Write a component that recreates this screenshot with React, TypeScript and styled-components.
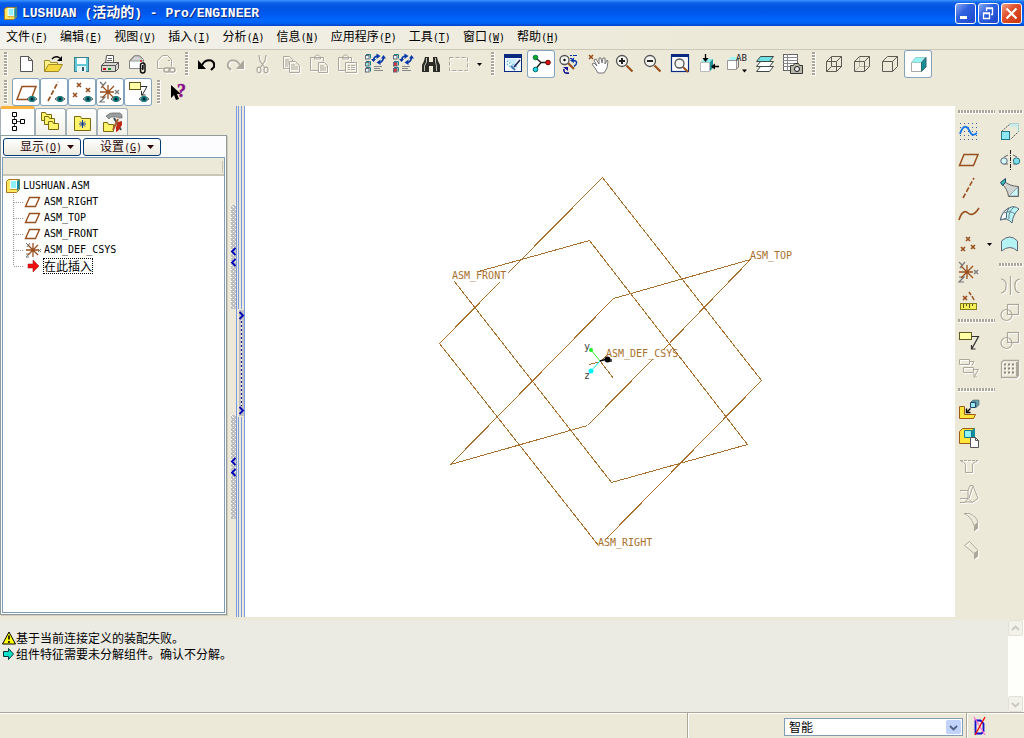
import React from 'react';
import styled, { createGlobalStyle, css } from 'styled-components';

const face = '#ece9d8';
const brown = '#99501f';
const gray = '#aca899';
const plane3d = '#a8702c';
const latin = '"DejaVu Sans Mono", "Noto Sans CJK SC", monospace';
const cjk = '"Noto Sans CJK SC", "Liberation Sans", sans-serif';

const GlobalStyle = createGlobalStyle`
  * { box-sizing: border-box; }
  html, body { margin: 0; padding: 0; }
  body { background: ${face}; font: 12px/16px ${cjk}; color: #000; }
  button, select { font: inherit; color: inherit; margin: 0; padding: 0; }
  svg { display: block; }
`;

const Window = styled.div`
  display: flex;
  flex-direction: column;
  min-height: 100vh;
  background: ${face};
`;

/* ---------- title bar ---------- */

const TitleBar = styled.header`
  display: flex;
  align-items: center;
  gap: 4px;
  height: 26px;
  padding: 0 2px 0 3px;
  background: linear-gradient(#3d95ff 0, #0a5fe8 3px, #0054e3 8px, #0058ee 14px, #0068ff 20px, #0062f5 23px, #0042c8 26px);
`;

const TitleText = styled.h1`
  flex: 1;
  margin: 0;
  font: bold 13px/20px "Liberation Mono", "Noto Sans CJK SC", monospace;
  color: #fff;
  text-shadow: 1px 1px 0 #0a2a80;
  white-space: pre;
`;

const TitleCjk = styled.span`
  font-size: 14px;
`;

const WindowButtons = styled.div`
  display: flex;
  gap: 2px;
`;

const WindowButton = styled.button<{ $close?: boolean }>`
  width: 21px;
  height: 21px;
  border: 1px solid #fff;
  border-radius: 3px;
  background: ${p => p.$close
    ? 'linear-gradient(135deg, #f0a088, #e2512c 40%, #c8350c)'
    : 'linear-gradient(135deg, #8aa8f4, #2f62e0 40%, #1c46c8)'};
`;

/* ---------- menu bar ---------- */

const MenuBar = styled.nav`
  display: flex;
  align-items: center;
  height: 24px;
  border-bottom: 1px solid #cbc8b8;
  background: linear-gradient(90deg, #f3f2ec, ${face} 70%);
`;

const MenuItem = styled.button`
  height: 20px;
  padding: 0 6px;
  margin-top: -2px;
  border: 0;
  background: none;
  white-space: nowrap;
`;

const Key = styled.span`
  font: 10px/16px ${latin};
`;

/* ---------- tool bars ---------- */

const ToolRow = styled.div`
  display: flex;
  height: 28px;
`;

const Handle = styled.div`
  flex: none;
  width: 13px;
  height: 28px;
  padding: 2px 0 2px 5px;
  &:first-child { width: 12px; padding-left: 4px; }
  &::before {
    content: "";
    display: block;
    width: 3px;
    height: 24px;
    border-right: 1px solid #fbfaf4;
    background: repeating-linear-gradient(#aaa69c 0 2px, #fbfaf4 2px 3px);
  }
`;

const ToolButton = styled.button<{ $on?: boolean }>`
  flex: none;
  width: 28px;
  height: 28px;
  border: 0;
  border-radius: 3px;
  background: none;
  ${p => p.$on && css`
    background: #fff;
    box-shadow: inset 0 0 0 1px #84a3bd;
  `}
  &:disabled svg { filter: drop-shadow(1px 1px 0 #fff); }
`;

const ArrowButton = styled.button`
  display: flex;
  align-items: center;
  justify-content: center;
  flex: none;
  width: 13px;
  height: 28px;
  border: 0;
  background: none;
`;

/* ---------- main area ---------- */

const Main = styled.main`
  display: flex;
  flex: 1;
`;

const Navigator = styled.aside`
  display: flex;
  flex-direction: column;
  flex: none;
  width: 228px;
  padding-bottom: 2px;
`;

const TabList = styled.div`
  display: flex;
  align-items: flex-end;
  height: 29px;
`;

const Tab = styled.button<{ $active?: boolean }>`
  display: flex;
  align-items: center;
  justify-content: center;
  width: 31px;
  height: 27px;
  border: 1px solid #a3b0b8;
  border-bottom: 0;
  border-radius: 3px 3px 0 0;
  background: linear-gradient(#fff, #f1f0e8);
  ${p => p.$active && css`
    width: 35px;
    height: 29px;
    border-top: 3px solid #f9b140;
    background: #fff;
  `}
`;

const NavPanel = styled.section`
  display: flex;
  flex-direction: column;
  flex: 1;
  margin-right: 1px;
  padding: 2px 1px 1px 1px;
  border: 1px solid #919b9c;
  box-shadow: 1px 1px 0 #d0cdbf;
  background: #fcfcfe;
`;

const NavButtons = styled.div`
  display: flex;
  gap: 2px;
  padding: 0 1px 1px;
`;

const MenuButton = styled.button`
  display: flex;
  align-items: center;
  justify-content: flex-end;
  gap: 5px;
  width: 78px;
  height: 18px;
  padding-right: 6px;
  border: 1px solid #003c74;
  border-radius: 3px;
  background: linear-gradient(#fff, #eceade);
  color: #2a0808;
  line-height: 16px;
`;

const TreeBox = styled.div`
  flex: 1;
  border: 1px solid #7f9db9;
  background: #fff;
`;

const TreeHeader = styled.div`
  height: 18px;
  padding: 3px 1px 3px 0;
  border-bottom: 2px solid #c9c6b8;
  background: ${face};
`;

const TreeHeaderRule = styled.div`
  height: 12px;
  border-right: 1px solid #c7c5b2;
`;

const Tree = styled.ul`
  margin: 0;
  padding: 2px 0 0 2px;
  list-style: none;
`;

const TreeRow = styled.li`
  display: flex;
  align-items: center;
  height: 16px;
  gap: 2px;
  font: 10px/16px ${latin};
`;

const InsertHere = styled.span`
  outline: 1px dotted #000;
  font: 12px/14px ${cjk};
`;

/* ---------- splitters ---------- */

const Sash = styled.div`
  display: flex;
  flex: none;
  width: 17px;
`;

const SashLeft = styled.div`
  display: flex;
  flex-direction: column;
  align-items: flex-end;
  width: 9px;
  padding-top: 99px;
  gap: 106px;
  border-right: 1px solid #7b9ae0;
`;

const Grip = styled.button`
  display: flex;
  flex-direction: column;
  align-items: center;
  justify-content: center;
  gap: 2px;
  width: 5px;
  height: 104px;
  border: 0;
  background:
    linear-gradient(#fff, #fff) 1px 1px / 1px 1px no-repeat,
    conic-gradient(from 270deg at 1px 1px, #fff 90deg, transparent 0) 0 0 / 4px 4px,
    conic-gradient(from 270deg at 1px 1px, #fff 90deg, transparent 0) 2px 2px / 4px 4px,
    #c0c0c0;
`;

const SashRight = styled.div`
  display: flex;
  flex-direction: column;
  flex: 1;
  border-right: 1px solid #7b9ae0;
`;

const Rails = styled.div<{ $grow?: boolean }>`
  height: 203px;
  margin: 0 2px 0 1px;
  border: solid #7b9ae0;
  border-width: 0 1px;
  ${p => p.$grow && css`flex: 1;`}
`;

const NarrowGrip = styled(Grip)`
  justify-content: space-between;
  height: 106px;
  margin: 1px 0 1px 2px;
  padding: 1px 0;
  background:
    linear-gradient(#c0c0c0, #c0c0c0) 0 0 / 5px 10px no-repeat,
    linear-gradient(#c0c0c0, #c0c0c0) 0 100% / 5px 10px no-repeat,
    repeating-linear-gradient(#101080 0 1px, #fff 1px 3px, #101080 3px 4px) 2px 0 / 1px 100% no-repeat,
    #c0c0c0;
`;

const View = styled.section`
  position: relative;
  flex: 1;
  min-width: 0;
  background: #fff;
`;

const Scene = styled.svg`
  position: absolute;
  width: 100%;
  height: 100%;
`;

const ToolColumns = styled.aside`
  display: flex;
  flex: none;
`;

const ToolColumn = styled.div<{ $wide?: boolean }>`
  width: ${p => (p.$wide ? 41 : 28)}px;
`;

const ToolLine = styled.div`
  display: flex;
`;

const HandleH = styled.div`
  height: 13px;
  padding: 5px 1px 0 3px;
  &:first-child { height: 12px; padding-top: 4px; }
  &::before {
    content: "";
    display: block;
    height: 3px;
    border-bottom: 1px solid #fbfaf4;
    background: repeating-linear-gradient(90deg, #aaa69c 0 2px, #fbfaf4 2px 3px);
  }
`;

/* ---------- messages and status ---------- */

const Messages = styled.section`
  display: flex;
  flex: none;
  height: 92px;
  margin-top: 3px;
  background: #ebebe4;
`;

const MessageList = styled.ul`
  flex: 1;
  margin: 0;
  padding: 10px 2px;
  list-style: none;
`;

const Message = styled.li`
  display: flex;
  align-items: center;
  height: 16px;
`;

const ScrollBar = styled.div`
  display: flex;
  flex-direction: column;
  justify-content: space-between;
  width: 16px;
  padding-right: 1px;
  background: #fefefb;
`;

const ScrollButton = styled.button`
  width: 15px;
  height: 16px;
  border: 1px solid #e3e1d4;
  border-radius: 2px;
  background: #f3f2ea;
  display: flex;
  align-items: center;
  justify-content: center;
`;

const StatusBar = styled.footer`
  display: flex;
  flex: none;
  height: 26px;
  border-top: 1px solid ${gray};
  box-shadow: inset 0 1px 0 #fff;
`;

const StatusCell = styled.div<{ $grow?: boolean }>`
  display: flex;
  align-items: center;
  justify-content: flex-end;
  width: 279px;
  padding: 3px 3px 0 0;
  border-right: 1px solid ${gray};
  box-shadow: 1px 0 0 #fff;
  ${p => p.$grow && css`flex: 1;`}
`;

const FilterBox = styled.div`
  display: flex;
  align-items: center;
  width: 179px;
  height: 18px;
  padding-right: 1px;
  border: 1px solid #7f9db9;
  background: #fff;
`;

const FilterSelect = styled.select`
  flex: 1;
  height: 16px;
  padding-left: 4px;
  border: 0;
  background: none;
  appearance: none;
  outline: 0;
  line-height: 16px;
`;

const SelectArrow = styled.span`
  display: flex;
  align-items: center;
  justify-content: center;
  width: 15px;
  height: 14px;
  border-radius: 2px;
  background: #c1d2fb;
`;

const StatusIcon = styled.div`
  width: 57px;
  padding: 3px 0 0 6px;
`;

/* ---------- drawing helpers ---------- */

type Art = React.ReactNode;

const P = ({ d, s = '#404040', f = 'none', w = 1, dash }: { d: string; s?: string; f?: string; w?: number; dash?: string }) => (
  <path d={d} stroke={s} fill={f} strokeWidth={w} strokeDasharray={dash} />
);

const Cross = ({ x, y, r = 2 }: { x: number; y: number; r?: number }) => (
  <P d={`M${x - r} ${y - r}L${x + r} ${y + r}M${x - r} ${y + r}L${x + r} ${y - r}`} s={brown} w={1.6} />
);

const Eye = () => (
  <g>
    <path d="M15 21Q20 16 25 21Q20 26 15 21z" fill="#b9c8c8" stroke="#505860" />
    <circle cx="20" cy="21" r="3" fill="#108080" />
    <circle cx="20" cy="21" r="1.5" fill="#002838" />
  </g>
);

const Clip = ({ c = '#101010' }: { c?: string }) => (
  <g fill="none" stroke={c} strokeWidth="1.5">
    <rect x="16.5" y="13" width="4.5" height="10" rx="2.2" />
    <path d="M18.7 15v5" />
  </g>
);

const Star = ({ x, y }: { x: number; y: number }) => (
  <P d={`M${x} ${y - 7}V${y + 7}M${x - 8} ${y}H${x + 6}M${x - 6} ${y - 6}L${x + 6} ${y + 6}M${x - 6} ${y + 6}L${x + 6} ${y - 6}`} s={brown} w={1.3} />
);

const AxisXYZ = () => (
  <P d="M4 4l3 3M10 4L5 10M4 19h5l-5 5h5M19 12l4 4M23 12l-4 4" s="#777" w={1.2} />
);

const Glass = ({ sign }: { sign: string }) => (
  <g>
    <P d="M15.5 15.5L21.5 21.5" s={brown} w={2.2} />
    <circle cx="11" cy="11" r="5.5" fill="#f6f6f2" stroke="#555" strokeWidth="1.3" />
    <P d={sign} s="#222" w={2} />
  </g>
);

const Regen = ({ c, last }: { c: string; last: string }) => (
  <g>
    {[5, 12, 18].map((y, i) => (
      <g key={y}>
        <rect x="4.5" y={y + 0.5} width="3.5" height="3.5" fill={i === 0 ? '#e8ffff' : i === 1 ? c : last} stroke="#667" />
        <path d={`M5 ${y - 0.5}h4.500v4`} fill="none" stroke="#208088" />
      </g>
    ))}
    <P d="M12.500 11Q12.500 7 16 6M22.500 7Q22.500 11 19 12.500" s="#0838a8" w={1.700} />
    <path d="M15.500 3.500l4 2.500-4 3zM19.500 9.500l-4 3 4 2.500zM10 9h5l-2.500 3zM20 8.500h5L22.500 5z" fill="#0838a8" />
    <P d="M13 16.500h8M13 18.500h6M13 20.500h9" s="#888" />
  </g>
);

const Wire = ({ back }: { back: string }) => (
  <g>
    <P d="M11.500 7v9.500H22M6.500 21.500l5-5" s={back} />
    <P d="M6.500 11.500h10v10h-10zM6.500 11.500l5-5h10l-5 5M21.500 6.500v10l-5 5" s="#5c5c54" />
  </g>
);

const SmallFolder = ({ x, y }: { x: number; y: number }) => (
  <path d={`M${x}.5 ${y}.5h4l1 2h5v6h-10z`} fill="#fff36a" stroke="#7a6a10" />
);

const Note = () => (
  <g>
    <rect x="4.500" y="5.500" width="12" height="7" fill="#ffffa8" stroke="#625a1c" />
    <P d="M17 9.500h6.500L17 21.500M16.500 18v4h4" s="#303030" w={1.2} />
  </g>
);

const Merge = () => (
  <g fill="none" stroke={gray} strokeWidth="1.2">
    <rect x="11.500" y="5.500" width="11" height="10" />
    <circle cx="10.500" cy="16" r="5.500" />
  </g>
);

const art: Record<string, Art> = {
  fresh: <P d="M8.500 6.500h8l4 4v11h-12zM16.500 6.500v4h4" f="#fff" s="#555" />,
  open: (
    <g>
      <path d="M4.500 21.500v-11h5l1 2h7v3" fill="#fff28a" stroke="#a08a28" />
      <path d="M4.500 21.500l4-7h14l-4 7z" fill="#f5d840" stroke="#a08a28" />
      <P d="M12 9Q15 5 20 8" s="#000" w={1.3} />
      <path d="M22 6v5h-5z" />
    </g>
  ),
  save: (
    <g>
      <rect x="6.500" y="7.500" width="14" height="14" fill="#63c9d8" stroke="#3d7f8a" />
      <rect x="9" y="8" width="9" height="6" fill="#fff" />
      <rect x="9" y="16" width="9" height="6" fill="#e6f6f6" />
      <rect x="14" y="17" width="2" height="4" fill="#356" />
    </g>
  ),
  print: (
    <g>
      <path d="M9.500 13.500l1-8h7v8" fill="#fff" stroke="#555" />
      <P d="M12 8.500h4M11 10.500h5" s="#666" />
      <path d="M5.500 15.500l3-3h14v6l-3 3h-14z" fill="#d8d8d0" stroke="#555" />
      <P d="M5.500 15.500h14v6M19.500 15.500l3-3" s="#555" />
      <rect x="7" y="18" width="3" height="2" fill="#c01818" />
      <rect x="12" y="18" width="3" height="2" fill="#109030" />
    </g>
  ),
  mail: (
    <g>
      <path d="M5.500 18.500v-8l5-5h5l4 4v9z" fill="#fff" stroke="#888" />
      <path d="M6 11l5-5h4l4 5z" fill="#d4d4d4" stroke="#999" />
      <circle cx="17" cy="11" r="1" fill="#d02020" />
      <Clip />
    </g>
  ),
  mailLink: (
    <g>
      <P d="M5.500 18.500v-8l5-5h5l4 4v7M5.500 18.500h7M16 10.500h2" s={gray} />
      <g fill="none" stroke={gray} strokeWidth="1.500"><rect x="12" y="18" width="6" height="4" rx="2" /><rect x="17" y="18" width="6" height="4" rx="2" /></g>
    </g>
  ),
  undo: (
    <g>
      <P d="M9 15Q12 9.500 18 10.500Q22 12 21 17L18 20" s="#000" w={2} />
      <path d="M5 10l8 9H5z" />
    </g>
  ),
  redo: (
    <g>
      <P d="M19 15Q16 9.500 10 10.500Q6 12 7 17L10 20" s={gray} w={1.800} />
      <path d="M23 10l-8 9h8z" fill={gray} />
    </g>
  ),
  cut: (
    <g stroke={gray} fill="none" strokeWidth="1.200">
      <path d="M10 5l1 6 5 7M17 5l-1 6-5 7" />
      <ellipse cx="10" cy="20" rx="2" ry="2.800" /><ellipse cx="17" cy="20" rx="2" ry="2.800" />
    </g>
  ),
  copy: <P d="M12 18.500H6.500v-12h6l3 3v2M8 10h4M8 12h4M8 14h4M8 16h3M12.500 11.500h6l4 4v7h-10zM14 15h4M14 17h7M14 19h7" s={gray} />,
  paste: <P d="M13 20.500H5.500v-13h13v4M9.500 9v-2l2-2h2l2 2v2zM13.500 12.500h6l3 3v7h-9zM15 16h4M15 18h6M15 20h6" s={gray} />,
  pasteSpecial: <P d="M12 20.500H5.500v-13h13v4M9.500 9v-2l2-2h2l2 2v2zM12.500 12.500h11v10h-11zM15 15.500h2M18 15.500h4M15 17.500h2M18 17.500h4M15 19.500h2M18 19.500h4" s={gray} />,
  regen: <Regen c="#8ff0e0" last="#e8ffff" />,
  regenAll: <Regen c="#e03040" last="#e03040" />,
  find: (
    <g fill="#2a2a26">
      <path d="M8 7h4v5h4V7h4l1 4 2 4v7h-7v-6h-4v6H5v-7l2-4z" />
      <P d="M9.500 8v4l-2 4v5M18.500 8v4l1 4v5" s="#b9b9ad" />
    </g>
  ),
  select: <rect x="4.500" y="7.500" width="18" height="13" fill="none" stroke={gray} strokeDasharray="4 2" />,
  repaint: (
    <g>
      <rect x="5.500" y="5" width="17" height="16.500" fill="#f0f9ff" stroke="#0a2a80" />
      <rect x="5" y="4" width="18" height="4" fill="#0a2a80" />
      <P d="M8 11l10 7M8 14l7 5M12 10l6 5M10 10l8 7" s="#38a8d8" dash="1 2" w={1.500} />
      <path d="M8 9h10l-4 6z" fill="#c8ecfa" />
      <P d="M21 10l-6 7" s="#225" w={1.600} /><P d="M12 16l4 4" s="#4878b0" w={2} />
    </g>
  ),
  spin: (
    <g>
      <P d="M9 8l5 4.500-5 6M14 12.500h6" s="#202020" w={1.400} />
      <circle cx="8.500" cy="7.500" r="2.300" fill="#10a818" stroke="#075" /><circle cx="21" cy="12.500" r="2.300" fill="#e01010" stroke="#600" /><circle cx="8.500" cy="19.500" r="2.300" fill="#20d8e0" stroke="#066" />
    </g>
  ),
  orient: (
    <g>
      <P d="M13 13l6 6" s={brown} w={2.200} />
      <circle cx="9.500" cy="10" r="4.500" fill="#f4f4f0" stroke="#555" strokeWidth="1.300" />
      <circle cx="9.500" cy="10" r="1.200" />
      <P d="M15 5.500h2M18 5.500h4M15 8.500h2" s="#0838a8" />
      <P d="M18 10.500q5 0 3 4l-2 2" s="#0838a8" w={1.400} />
      <path d="M19 7.500l-4 3 4 2.500z" fill="#0838a8" />
      <P d="M14 23Q8 24 9 19" s="#101090" w={1.600} /><path d="M8 17h5v4z" fill="#101090" />
    </g>
  ),
  pan: (
    <g>
      <Cross x={8} y={7} />
      <path d="M12 18l-3-4 2-1 3 3-3-6 2-1 3 5V8h2l1 5 1-5h2v6l2-4 1 1-1 7-3 5h-6z" fill="#fff" stroke="#777" />
    </g>
  ),
  zoomIn: <Glass sign="M8 11h6M11 8v6" />,
  zoomOut: <Glass sign="M8 11h6" />,
  refit: (
    <g>
      <rect x="4.500" y="5" width="17" height="16.500" fill="#fff" stroke="#0a2a80" strokeWidth="1.200" />
      <rect x="4" y="4" width="18" height="3" fill="#0a2a80" />
      <P d="M16 17l5 5" s={brown} w={2} />
      <circle cx="12.500" cy="13.500" r="4.500" fill="#f4f4f0" stroke="#555" strokeWidth="1.300" />
    </g>
  ),
  reorient: (
    <g>
      <path d="M5.500 12.500h9v9h-9z" fill="#fff" stroke="#bbb" /><path d="M6 12l3-3h9l-3 3z" fill="#8ee" /><path d="M15 12l3-3v9l-3 3z" fill="#189098" />
      <P d="M10.500 4v5M19 16.500h5" s="#000" w={1.300} /><path d="M7.500 8h6l-3 4zM16 16.500l4-3v6z" />
    </g>
  ),
  views: (
    <g>
      <path d="M4.500 10.500h9v9h-9z" fill="#fff" stroke="#999" /><path d="M5 10l3-3h7l-1 3z" fill="#a5f5f5" /><P d="M13.500 10l2-2v9l-2 2" s="#777" />
      <text x="13" y="11" fontSize="9" fontFamily='"DejaVu Sans Mono"' fill="#222">AB</text>
      <path d="M19 19.500h5l-2.500 3z" />
    </g>
  ),
  layers: (
    <g stroke="#404848">
      <path d="M5.500 21.500l4-5h13l-4 5z" fill="#fff" /><path d="M5.500 16.500l4-5h13l-4 5z" fill="#fff" /><path d="M5.500 11.500l4-5h13l-4 5z" fill="#6fe3e3" />
    </g>
  ),
  viewMgr: (
    <g>
      <rect x="4.500" y="4.500" width="14" height="16" fill="#fff" stroke="#666" /><P d="M4 7.500h15M4 10.500h15M4 13.500h15M4 16.500h15M8.500 4v17" s="#888" />
      <path d="M11.500 15.500h3l1-2h4l1 2h3v8h-12z" fill="#b8b8a8" stroke="#333" /><circle cx="18" cy="19" r="2.500" fill="#eee" stroke="#111" />
    </g>
  ),
  wire: <Wire back="#5c5c54" />,
  hidden: <Wire back="#b5b2a6" />,
  noHidden: <Wire back="none" />,
  shaded: (
    <g>
      <path d="M7.500 12.500h10v9h-10z" fill="#fff" stroke="#aaa" /><path d="M7.500 12.500l4-5h10l-4 5z" fill="#98f4f4" stroke="#9cc" /><path d="M17.500 12.500l4.500-5v9.500l-4.500 4.500z" fill="#168e98" stroke="#35666c" />
    </g>
  ),
  showPlane: <g><P d="M5 21.500L10 8.500h14l-5 13z" s={brown} w={1.500} /><Eye /></g>,
  showAxis: <g><P d="M8 23L18 4" s={brown} w={1.700} dash="5 2" /><Eye /></g>,
  showPoint: <g><Cross x={11} y={7} /><Cross x={20} y={12} /><Cross x={7} y={17} /><Eye /></g>,
  showCsys: <g><AxisXYZ /><Star x={12} y={14} /><Eye /></g>,
  showNote: (
    <g>
      <rect x="5.500" y="4.500" width="11" height="7" fill="#ffffa8" stroke="#625a1c" /><P d="M17 8.500h6l-5 9M17.500 13v4h4" s="#303030" /><Eye />
    </g>
  ),
  help: (
    <g>
      <path d="M6 7v13l3-3 2 5 3-1-2-5h4z" />
      <text x="12" y="19" fontSize="18" fontWeight="bold" fontFamily='"Liberation Serif"' fill="#8a108a" stroke="#8a108a" strokeWidth=".500">?</text>
    </g>
  ),
  sketch: (
    <g>
      {[5, 9, 13, 17, 21].map(y => <P key={y} d={`M5 ${y + 0.5}h18`} s="#3f5f9f" dash="1 3" />)}
      <P d="M5 16C7 9 11 6 14 12S18 18 22 15" s="#1878e8" w={1.800} />
    </g>
  ),
  plane: <P d="M4.500 19.500L9 8.500h14L18.500 19.500z" s={brown} w={1.500} />,
  axis: <P d="M8 24L19 4" s={brown} w={1.600} dash="5 2" />,
  curve: <P d="M4 18C7 8 11 9 13 11S19 14 24 6" s={brown} w={1.600} />,
  points: <g><Cross x={13} y={9} /><Cross x={8} y={19} /><Cross x={18} y={17} /></g>,
  csys: <g><AxisXYZ /><Star x={12} y={14} /></g>,
  analysis: (
    <g>
      <Cross x={10} y={12} /><P d="M14 6l2 3M17 10l2 4" s={brown} w={1.500} />
      <rect x="5.500" y="17.500" width="16" height="6" fill="#f3ee58" stroke="#857c1a" /><P d="M8.500 18v4M11.500 18v2M14.500 18v4M17.500 18v2" s="#5a5520" />
    </g>
  ),
  note: <Note />,
  notes: <P d="M4.500 4.500h10v5h-10zM15 6.500h4l-2 4M8.500 12.500h10v5h-10zM19 14.500h4.500l-4 7M19 18v4h3" s={gray} />,
  assemble: (
    <g>
      <path d="M4.500 10.500h5v8h11l-2 4h-14z" fill="#ffe63c" stroke="#a05a18" />
      <path d="M15.500 6.500h5v5h-5z" fill="#98e8f4" stroke="#246" /><path d="M16 6l2-2h6v5l-3 2.500V6z" fill="#6aa0a8" stroke="#356" strokeWidth=".500" />
      <P d="M15.500 12.500l-3 3M11.500 12.500v4h4" s="#000" w={1.400} />
    </g>
  ),
  create: (
    <g>
      <path d="M4.500 7.500l3-3h12v12l-3 3h-12z" fill="#ffe63c" stroke="#a05a18" /><path d="M9.500 6.500h7v7h-7z" fill="#8ef4fa" stroke="#178" /><path d="M17 6l3-2v10l-3 2z" fill="#14909c" />
      <P d="M15.500 13.500h5l3 3v7h-8zM20.500 13.500v3h3" f="#fff" s="#555" />
    </g>
  ),
  hole: <g><P d="M5 8.500h18" s={gray} dash="3 1" /><P d="M6 9.500q3 0 4.500 3v8h7v-8q1.500-3 4.500-3" s={gray} /></g>,
  shell: <P d="M5 10.500h8v8H5M13 10.500l2-5h3l5 13-6 4-4-4M18 6l-4 12M13 18.500l-3 4H5M17 22l-7 0" s={gray} />,
  round: <g><P d="M9 5.500h5q8 3 9 9l-4 3Q17 9 9 5.500" s={gray} /><path d="M19 17.500l4-3v6l-4 3z" fill={gray} /></g>,
  chamfer: <g><P d="M9.500 9.500l5-4 8.500 9-4 3z" s={gray} /><path d="M19 17.500l4-3v6l-4 3z" fill={gray} /></g>,
  extrude: (
    <g>
      <P d="M5.500 13.500l9-8h8v8l-8 8" s="#555" dash="2 1" /><path d="M14 5h9v8l-2 2v-6h-8z" fill="#bdeeee" opacity=".7" />
      <rect x="5.500" y="13.500" width="8" height="8" fill="#8ee8f4" stroke="#287888" />
    </g>
  ),
  revolve: (
    <g>
      <P d="M14.500 4v20" s="#222" dash="4 1 1 1" /><P d="M8 11l4-2M17 9l4 2M8 18h4M17 18h4" s="#666" />
      <circle cx="8" cy="15" r="3.200" fill="#d5f8f8" stroke="#567" /><circle cx="20.500" cy="15" r="3.200" fill="#80dce8" stroke="#287888" />
    </g>
  ),
  blend: (
    <g>
      <path d="M8 7q5 5 14.500 5.500v10h-10q-1-8-7-13z" fill="#d0d4d0" stroke="#666" /><path d="M4.500 8.500l5-4v4l-3 3z" fill="#38b8b8" stroke="#246" /><path d="M13 22l9-9v9z" fill="#c8f6f6" stroke="#667" strokeWidth=".500" />
    </g>
  ),
  boundary: (
    <g stroke="#567" fill="#b8f4f4">
      <path d="M4.500 18Q6 9 13 6Q18 3 23 7Q17 12 16 21Q11 15 4.500 18z" /><path d="M4.500 18Q6 9 13 6Q9 11 10.500 16z" fill="#fff" /><path d="M8 11q6-3 11 1M18 5q-6 5-5 12" fill="none" strokeWidth=".800" />
    </g>
  ),
  style: <path d="M5.500 11Q14 3 21.500 11v10Q14 14 5.500 21z" fill="#b4f4f6" stroke="#667" />,
  mirror: <P d="M14.500 5v19M5 8q6 1 5 8 0 5-5 6M24 8q-6 1-5 8 0 5 5 6" s={gray} w={1.200} />,
  merge: <Merge />,
  pattern: (
    <g>
      <P d="M5.500 7.500l2-2h15v15l-2 2h-15z" s={gray} w={1.300} /><P d="M21 7v14" s={gray} w={2} />
      {[9.5, 13.5, 17.5].map(y => <P key={y} d={`M8 ${y}h11`} s="#88857a" w={2} dash="2 2" />)}
    </g>
  ),
};

type Tool = { icon: string; label: string; on?: boolean; off?: boolean; menu?: boolean };
const t = (icon: string, label: string, extra: Partial<Tool> = {}): Tool => ({ icon, label, ...extra });

const DownArrow = ({ color = '#000', w = 5 }: { color?: string; w?: number }) => (
  <svg width={w} height={(w + 1) / 2} viewBox={`0 0 ${w} ${(w + 1) / 2}`} aria-hidden="true">
    <path d={`M0 0h${w}L${w / 2} ${(w + 1) / 2}z`} fill={color} />
  </svg>
);

const Chevron = ({ dir, color, size = 9 }: { dir: 'up' | 'down' | 'left' | 'right'; color: string; size?: number }) => {
  const d = { up: 'M1 6l3.500-3.500L8 6', down: 'M1 3l3.500 3.500L8 3', left: 'M6.500 1L3 4.500 6.500 8', right: 'M2.500 1l3.500 3.500L2.500 8' }[dir];
  return <svg width={size} height={size} viewBox="0 0 9 9" aria-hidden="true"><path d={d} fill="none" stroke={color} strokeWidth="1.800" /></svg>;
};

const ToolItem = ({ tool }: { tool: Tool }) => (
  <>
    <ToolButton aria-label={tool.label} $on={tool.on} disabled={tool.off}>
      <svg width="28" height="28" viewBox="0 0 28 28" aria-hidden="true">{art[tool.icon]}</svg>
    </ToolButton>
    {tool.menu && <ArrowButton aria-label={`${tool.label}选项`}><DownArrow /></ArrowButton>}
  </>
);

/* ---------- content ---------- */

const menus: [string, string][] = [
  ['文件', 'F'], ['编辑', 'E'], ['视图', 'V'], ['插入', 'I'], ['分析', 'A'], ['信息', 'N'],
  ['应用程序', 'P'], ['工具', 'T'], ['窗口', 'W'], ['帮助', 'H'],
];

const off = { off: true };
const on = { on: true };

const mainTools: Tool[][] = [
  [t('fresh', '新建'), t('open', '打开'), t('save', '保存'), t('print', '打印'), t('mail', '发送'), t('mailLink', '发送链接', off)],
  [
    t('undo', '撤消'), t('redo', '重做', off), t('cut', '剪切', off), t('copy', '复制', off), t('paste', '粘贴', off),
    t('pasteSpecial', '选择性粘贴', off), t('regen', '再生'), t('regenAll', '再生管理器'), t('find', '查找'),
    t('select', '选取框', { off: true, menu: true }),
  ],
  [
    t('repaint', '重画'), t('spin', '旋转中心', on), t('orient', '定向模式'), t('pan', '平移'), t('zoomIn', '放大'),
    t('zoomOut', '缩小'), t('refit', '重新调整'), t('reorient', '重定向'), t('views', '已命名视图'), t('layers', '层'), t('viewMgr', '视图管理器'),
  ],
  [t('wire', '线框'), t('hidden', '隐藏线'), t('noHidden', '无隐藏线'), t('shaded', '着色', on)],
];

const displayTools: Tool[][] = [
  [t('showPlane', '平面显示', on), t('showAxis', '轴显示', on), t('showPoint', '点显示', on), t('showCsys', '坐标系显示', on), t('showNote', '注释显示', on)],
  [t('help', '上下文帮助')],
];

const datumTools: Tool[][] = [
  [
    t('sketch', '草绘'), t('plane', '平面'), t('axis', '轴'), t('curve', '曲线'), t('points', '点', { menu: true }),
    t('csys', '坐标系'), t('analysis', '分析'),
  ],
  [t('note', '注释'), t('notes', '注释组', off)],
  [
    t('assemble', '装配'), t('create', '创建'), t('hole', '孔', off), t('shell', '壳', off),
    t('round', '倒圆角', off), t('chamfer', '倒角', off),
  ],
];

const featureTools: Tool[][] = [
  [t('extrude', '拉伸'), t('revolve', '旋转'), t('blend', '扫描'), t('boundary', '边界混合'), t('style', '造型')],
  [t('mirror', '镜像', off), t('merge', '合并', off), t('merge', '修剪', off), t('pattern', '阵列', off)],
];

const ToolBar = ({ groups }: { groups: Tool[][] }) => (
  <ToolRow role="toolbar">
    {groups.map((g, i) => (
      <React.Fragment key={i}>
        <Handle />
        {g.map(x => <ToolItem key={x.label} tool={x} />)}
      </React.Fragment>
    ))}
  </ToolRow>
);

const SideBar = ({ groups, wide }: { groups: Tool[][]; wide?: boolean }) => (
  <ToolColumn $wide={wide} role="toolbar">
    {groups.map((g, i) => (
      <React.Fragment key={i}>
        <HandleH />
        {g.map(x => <ToolLine key={x.label}><ToolItem tool={x} /></ToolLine>)}
      </React.Fragment>
    ))}
  </ToolColumn>
);

const Cube = ({ size = 16 }: { size?: number }) => (
  <svg width={size} height={size} viewBox="0 0 16 16" aria-hidden="true">
    <path d="M1.500 3.500l2-2h11v10l-3 3h-10z" fill="#ffe860" stroke="#a8741c" />
    <path d="M5.500 2.500h6v8h-6z" fill="#8ef0fa" stroke="#fff" />
    <path d="M12 3l2.500-1.500v9L12 13z" fill="#1590a8" />
    <path d="M5 11.500h7" stroke="#c89820" />
  </svg>
);

const treeIcons: Record<string, Art> = {
  plane: <P d="M12.500 12.500l4-9h10l-4 9z" s={brown} w={1.400} />,
  csys: <g><P d="M13 1l2 2M17 1l-3 4M13 12h3l-3 3h3M25 7l3 3M28 7l-3 3" s="#777" /><P d="M20 1v14M13 8h13M15 3l10 10M15 13L25 3" s={brown} w={1.300} /></g>,
  arrow: <path d="M15 6h5V2l6 6-6 6v-4h-5z" fill="#f01010" stroke="#a00000" strokeWidth=".5" />,
};

const treeItems = [
  { name: 'ASM_RIGHT', icon: 'plane' }, { name: 'ASM_TOP', icon: 'plane' }, { name: 'ASM_FRONT', icon: 'plane' },
  { name: 'ASM_DEF_CSYS', icon: 'csys' }, { name: '在此插入', icon: 'arrow', insert: true },
];

const TreeIcon = ({ icon, last }: { icon: string; last?: boolean }) => (
  <svg width="37" height="16" viewBox="-8 0 37 16" aria-hidden="true">
    <path d={`M.5 0v${last ? 8 : 16}M1 8.500h10`} stroke="#999" strokeDasharray="1 1" fill="none" />
    {treeIcons[icon]}
  </svg>
);

const SceneDrawing = () => (
  <Scene viewBox="245 106 710 511" role="img" aria-label="LUSHUAN.ASM">
    <g fill="none" stroke={plane3d} shapeRendering="crispEdges" transform="translate(.5 .5)">
      <path d="M507 273L602 177L761 380L604 540M598 545L439 343L499 282" />
      <path d="M478 271L589 240L747 444L611 482L454 281" />
      <path d="M663 349L750 259L613 298L450 464L587 425L652 359" />
      <path d="M589 364L600 361L613 378M600 361L607 354" />
    </g>
    <path d="M600 361L591 350" stroke="#30e830" />
    <path d="M600 361L591 371" stroke="#00e8f0" />
    <path d="M600 361L607 359" stroke="#000" strokeWidth="1.500" />
    <circle cx="591" cy="350" r="2" fill="#20f020" />
    <circle cx="591" cy="371" r="2.500" fill="#00f4ff" />
    <path d="M608 359h4v3h-4z" fill="#555" />
    <circle cx="607.500" cy="359.500" r="3" />
    <g fontFamily='"DejaVu Sans Mono", monospace' fontSize="10" fill={plane3d}>
      <text x="452" y="279">ASM_FRONT</text>
      <text x="750" y="259">ASM_TOP</text>
      <text x="606" y="357">ASM_DEF_CSYS</text>
      <text x="598" y="546">ASM_RIGHT</text>
      <text x="584" y="350" fill="#444">y</text>
      <text x="584" y="379" fill="#444">z</text>
    </g>
  </Scene>
);

const TabIcon = ({ label, active, children }: { label: string; active?: boolean; children: Art }) => (
  <Tab role="tab" aria-selected={!!active} aria-label={label} $active={active}>
    <svg width="24" height="24" viewBox="0 0 24 24" aria-hidden="true">{children}</svg>
  </Tab>
);

export default function App() {
  return (
    <Window>
      <GlobalStyle />
      <TitleBar>
        <Cube size={15} />
        <TitleText>LUSHUAN (<TitleCjk>活动的</TitleCjk>) - Pro/ENGINEER</TitleText>
        <WindowButtons>
          <WindowButton aria-label="最小化">
            <svg width="19" height="19" viewBox="0 0 19 19"><path d="M4 12h7v3H4z" fill="#fff" /></svg>
          </WindowButton>
          <WindowButton aria-label="还原">
            <svg width="19" height="19" viewBox="0 0 19 19"><path d="M4.500 9.500h6v5h-6zM4 9h7M7.500 7V4.500h6v6H12M7 4h7" fill="none" stroke="#fff" strokeWidth="1.300" /></svg>
          </WindowButton>
          <WindowButton $close aria-label="关闭">
            <svg width="19" height="19" viewBox="0 0 19 19"><path d="M4.500 4.500l10 10M14.500 4.500l-10 10" stroke="#fff" strokeWidth="2.200" /></svg>
          </WindowButton>
        </WindowButtons>
      </TitleBar>

      <MenuBar>
        {menus.map(([name, key]) => (
          <MenuItem key={name}>{name}<Key>(<u>{key}</u>)</Key></MenuItem>
        ))}
      </MenuBar>

      <ToolBar groups={mainTools} />
      <ToolBar groups={displayTools} />

      <Main>
        <Navigator>
          <TabList role="tablist">
            <TabIcon label="模型树" active>
              <P d="M8.500 4v14M10 11.500h4" s="#555" /><P d="M6.500 2.500h4v4h-4zM6.500 9.500h4v4h-4zM14.500 9.500h4v4h-4zM6.500 16.500h4v4h-4z" s="#000" f="#fff" />
            </TabIcon>
            <TabIcon label="文件夹浏览器">
              <SmallFolder x={2} y={2} /><SmallFolder x={5} y={6} /><SmallFolder x={9} y={11} />
            </TabIcon>
            <TabIcon label="收藏夹">
              <path d="M4.500 6.500h6l1 2h9v12h-16z" fill="#fff36a" stroke="#7a6a10" /><P d="M12.500 10v8M9 14h7M10 11.500l5 5M15 11.500l-5 5" s="#1038a0" />
            </TabIcon>
            <TabIcon label="连接">
              <path d="M2.500 12.500h4l1 2h5v7h-10z" fill="#fff36a" stroke="#7a6a10" />
              <path d="M5 6q4-4 9-3h5l2 2v3h-3l-2-1h-6l-2 2z" fill="#9aa0a0" stroke="#666" strokeWidth=".700" />
              <P d="M13 8l7 12" s="#405050" w={2} /><P d="M17 9L12 20" s="#a86030" w={2} /><path d="M17 12l4-1v4l-4 6-2 1v-5z" fill="#c02818" />
            </TabIcon>
          </TabList>
          <NavPanel>
            <NavButtons>
              <MenuButton><span>显示<Key>(<u>O</u>)</Key></span><DownArrow w={7} color="#2a0808" /></MenuButton>
              <MenuButton><span>设置<Key>(<u>G</u>)</Key></span><DownArrow w={7} color="#2a0808" /></MenuButton>
            </NavButtons>
            <TreeBox>
              <TreeHeader><TreeHeaderRule /></TreeHeader>
              <Tree role="tree">
                <TreeRow role="treeitem"><Cube />LUSHUAN.ASM</TreeRow>
                {treeItems.map(i => (
                  <TreeRow key={i.name} role="treeitem">
                    <TreeIcon icon={i.icon} last={i.insert} />
                    {i.insert ? <InsertHere>{i.name}</InsertHere> : i.name}
                  </TreeRow>
                ))}
              </Tree>
            </TreeBox>
          </NavPanel>
        </Navigator>

        <Sash>
          <SashLeft>
            {['导航器', '浏览器'].map(n => (
              <Grip key={n} aria-label={n}>
                <Chevron dir="left" color="#0000b8" />
                <Chevron dir="left" color="#0000b8" />
              </Grip>
            ))}
          </SashLeft>
          <SashRight>
            <Rails />
            <NarrowGrip aria-label="展开">
              <Chevron dir="right" color="#0000b8" />
              <Chevron dir="right" color="#0000b8" />
            </NarrowGrip>
            <Rails $grow />
          </SashRight>
        </Sash>

        <View><SceneDrawing /></View>

        <ToolColumns>
          <SideBar groups={datumTools} wide />
          <SideBar groups={featureTools} />
        </ToolColumns>
      </Main>

      <Messages>
        <MessageList>
          <Message>
            <svg width="14" height="14" viewBox="0 0 14 14" aria-hidden="true">
              <path d="M7 1l6.500 12H.5z" fill="#ffff00" stroke="#000" /><path d="M7 4.500v4M7 10v2" stroke="#000" strokeWidth="1.600" />
            </svg>
            基于当前连接定义的装配失败。
          </Message>
          <Message>
            <svg width="14" height="14" viewBox="0 0 14 14" aria-hidden="true">
              <path d="M1.500 4.500h5v-3l5 5.500-5 5.500v-3h-5z" fill="#10e0c8" stroke="#003838" />
            </svg>
            组件特征需要未分解组件。确认不分解。
          </Message>
        </MessageList>
        <ScrollBar>
          <ScrollButton aria-label="向上"><Chevron dir="up" color="#c9c7bf" /></ScrollButton>
          <ScrollButton aria-label="向下"><Chevron dir="down" color="#c9c7bf" /></ScrollButton>
        </ScrollBar>
      </Messages>

      <StatusBar>
        <StatusCell $grow />
        <StatusCell>
          <FilterBox>
            <FilterSelect aria-label="选取过滤器"><option>智能</option></FilterSelect>
            <SelectArrow><Chevron dir="down" color="#4d6185" /></SelectArrow>
          </FilterBox>
        </StatusCell>
        <StatusIcon>
          <svg width="14" height="20" viewBox="0 0 14 20" aria-hidden="true">
            <path d="M2.500 4.500h5l3 3v8l-2 2h-6z" fill="none" stroke="#1010d0" strokeWidth="1.800" />
            <path d="M1 1l11 18" stroke="#ff70c8" strokeWidth="1.300" /><path d="M12 1L2 19" stroke="#f00000" strokeWidth="1.300" />
          </svg>
        </StatusIcon>
      </StatusBar>
    </Window>
  );
}
